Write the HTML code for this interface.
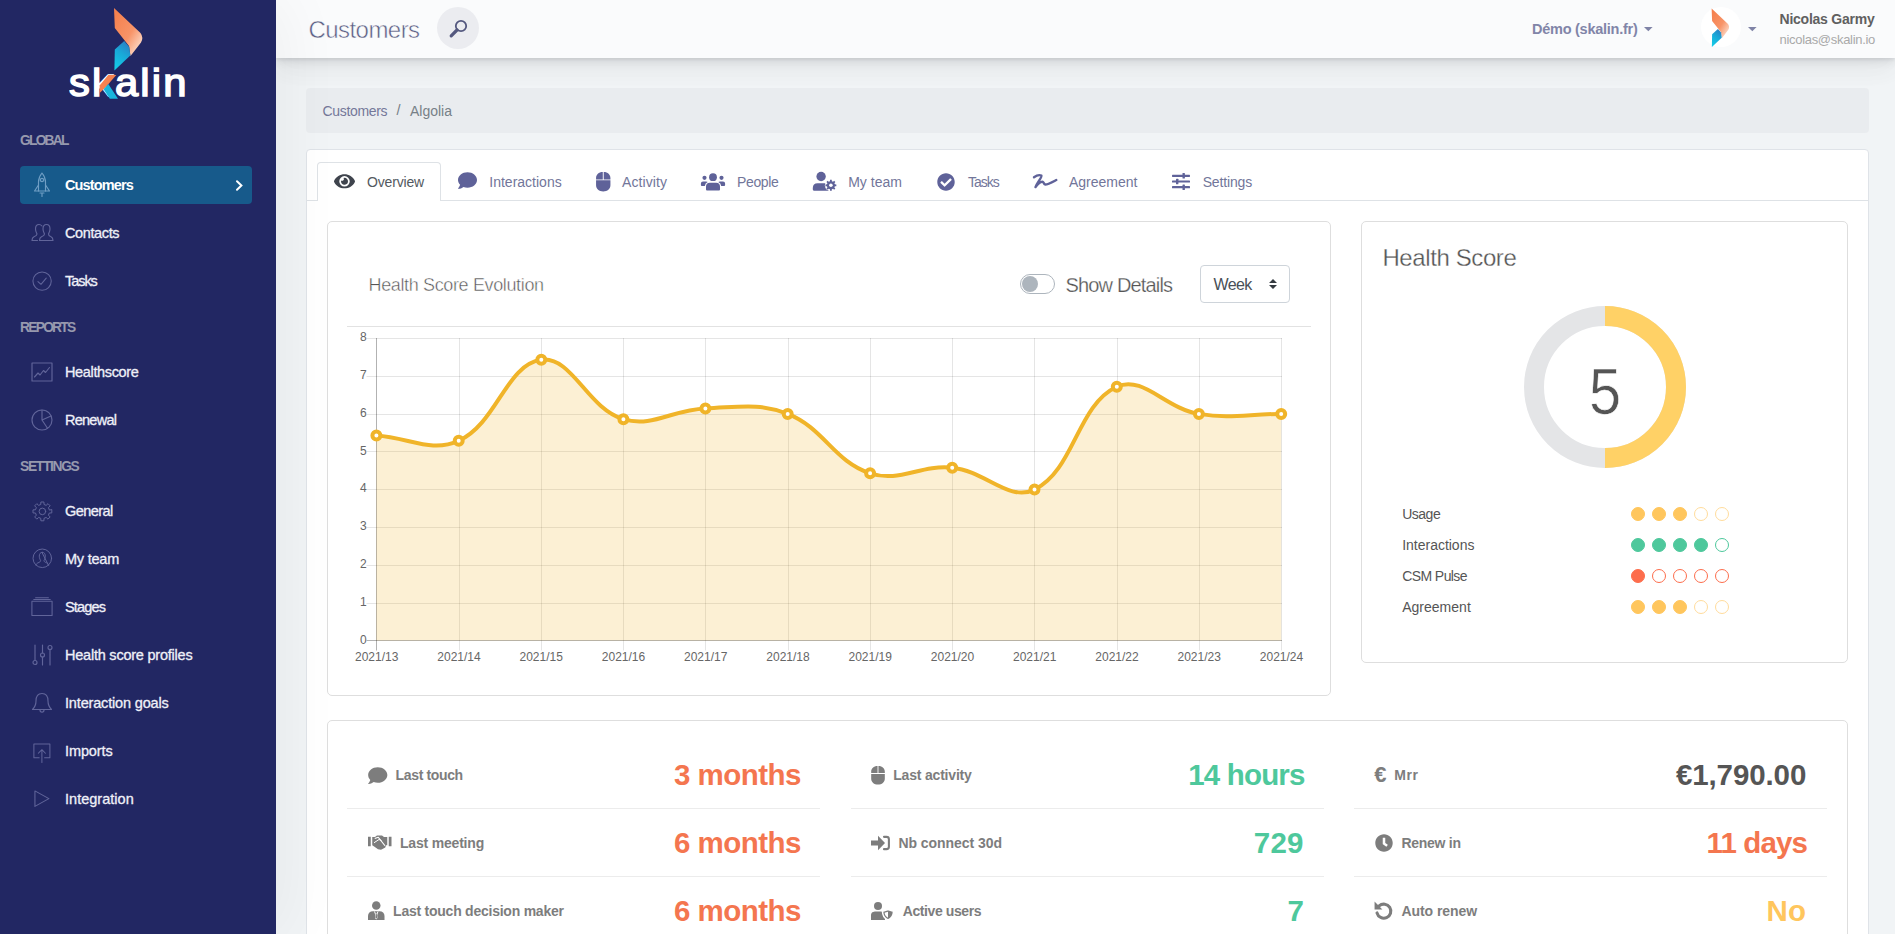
<!DOCTYPE html>
<html lang="en"><head><meta charset="utf-8"><title>Customers - Algolia</title>
<style>
*{box-sizing:border-box;margin:0;padding:0}
html,body{width:1895px;height:934px;overflow:hidden}
body{position:relative;background:#f1f4f6;font-family:"Liberation Sans",sans-serif;color:#555}
.t{position:absolute;white-space:nowrap}
.abs{position:absolute}
#sidebar{position:absolute;left:0;top:0;width:276px;height:934px;background:#222763;box-shadow:7px 0 60px rgba(0,0,0,.05);z-index:5}
#header{position:absolute;left:276px;top:0;width:1619px;height:58px;background:#fafbfc;z-index:4;
 box-shadow:0 7.5px 35px rgba(4,9,20,.03),0 15px 22.5px rgba(4,9,20,.03),0 4px 8.5px rgba(4,9,20,.08),0 2px 3px rgba(4,9,20,.06)}
#crumb{position:absolute;left:306px;top:88px;width:1563px;height:44.5px;background:#e9ecef;border-radius:4px}
#main{position:absolute;left:306px;top:149px;width:1563px;height:800px;background:#fff;border:1px solid #dfe3e8;border-radius:4px 4px 0 0}
.card{position:absolute;background:#fff;border:1px solid #dedede;border-radius:5px}
.hr{position:absolute;height:1px;background:#ececec}
.dot{position:absolute;width:14px;height:14px;border-radius:50%;border:1px solid}
svg{position:absolute;overflow:visible}
</style></head><body>

<div id="sidebar">
<svg style="left:0;top:0" width="276" height="110" viewBox="0 0 276 110">
<defs>
<linearGradient id="g1" x1="0.1" y1="0.1" x2="0.9" y2="0.95"><stop offset="0" stop-color="#f5814f"/><stop offset=".55" stop-color="#f89468"/><stop offset="1" stop-color="#fde3d4"/></linearGradient>
<linearGradient id="g2" x1="0.7" y1="0" x2="0.3" y2="1"><stop offset="0" stop-color="#2b7fc4"/><stop offset=".45" stop-color="#19a9d8"/><stop offset="1" stop-color="#14cbe6"/></linearGradient>
</defs>
<path d="M114 8 L140.500 33 Q143.800 37.500 141 42.500 L130.500 56 L129 46 L114.800 28 Z" fill="url(#g1)"/>
<path d="M124.200 41 L129.300 47 L130.300 55.500 L114.400 70.500 L114.800 49.500 Z" fill="url(#g2)"/>
</svg>
<div class="t" style="left:68.500px;top:54.500px;font-size:39px;line-height:56px;color:#fff;letter-spacing:2px;-webkit-text-stroke:1.5px #fff;transform:scaleX(1.07);transform-origin:0 0">skalin</div>
<svg style="left:0;top:0" width="276" height="110" viewBox="0 0 276 110"><path d="M99.600 85.500 L108.300 75 L116.300 75 L105 88 L99.600 93 Z" fill="#f58250"/><path d="M103.600 89.200 L108.300 84 L118 98.800 L109.800 98.800 Z" fill="#19b5dc"/></svg>
<div class="t" style="left:20.00px;top:132.40px;font-size:13.8px;line-height:18px;font-weight:700;color:#9799ae;letter-spacing:-1.760px;">GLOBAL</div>
<div class="t" style="left:20.00px;top:319.40px;font-size:13.8px;line-height:18px;font-weight:700;color:#9799ae;letter-spacing:-1.744px;">REPORTS</div>
<div class="t" style="left:20.00px;top:458.40px;font-size:13.8px;line-height:18px;font-weight:700;color:#9799ae;letter-spacing:-1.313px;">SETTINGS</div>
<div class="abs" style="left:20px;top:166px;width:232px;height:38px;background:#175a8b;border-radius:4px"></div>
<svg style="left:234.5px;top:179.6px" width="9" height="11" viewBox="0 0 9 11"><path d="M2 1.300 L6.400 5.500 L2 9.700" fill="none" stroke="#fff" stroke-width="2" stroke-linecap="round" stroke-linejoin="miter"/></svg>
<div class="t" style="left:65.00px;top:175.50px;font-size:14.5px;line-height:19px;font-weight:700;color:#fff;letter-spacing:-0.860px;">Customers</div>
<div class="t" style="left:65.00px;top:223.50px;font-size:14.5px;line-height:19px;font-weight:400;color:#eff0f8;letter-spacing:-0.377px;-webkit-text-stroke:.3px #eff0f8;">Contacts</div>
<div class="t" style="left:65.00px;top:271.50px;font-size:14.5px;line-height:19px;font-weight:400;color:#eff0f8;letter-spacing:-1.053px;-webkit-text-stroke:.3px #eff0f8;">Tasks</div>
<div class="t" style="left:65.00px;top:362.50px;font-size:14.5px;line-height:19px;font-weight:400;color:#eff0f8;letter-spacing:-0.352px;-webkit-text-stroke:.3px #eff0f8;">Healthscore</div>
<div class="t" style="left:65.00px;top:410.50px;font-size:14.5px;line-height:19px;font-weight:400;color:#eff0f8;letter-spacing:-0.746px;-webkit-text-stroke:.3px #eff0f8;">Renewal</div>
<div class="t" style="left:65.00px;top:501.50px;font-size:14.5px;line-height:19px;font-weight:400;color:#eff0f8;letter-spacing:-0.569px;-webkit-text-stroke:.3px #eff0f8;">General</div>
<div class="t" style="left:65.00px;top:549.50px;font-size:14.5px;line-height:19px;font-weight:400;color:#eff0f8;letter-spacing:-0.227px;-webkit-text-stroke:.3px #eff0f8;">My team</div>
<div class="t" style="left:65.00px;top:597.50px;font-size:14.5px;line-height:19px;font-weight:400;color:#eff0f8;letter-spacing:-0.823px;-webkit-text-stroke:.3px #eff0f8;">Stages</div>
<div class="t" style="left:65.00px;top:645.50px;font-size:14.5px;line-height:19px;font-weight:400;color:#eff0f8;letter-spacing:-0.227px;-webkit-text-stroke:.3px #eff0f8;">Health score profiles</div>
<div class="t" style="left:65.00px;top:693.50px;font-size:14.5px;line-height:19px;font-weight:400;color:#eff0f8;letter-spacing:-0.164px;-webkit-text-stroke:.3px #eff0f8;">Interaction goals</div>
<div class="t" style="left:65.00px;top:741.50px;font-size:14.5px;line-height:19px;font-weight:400;color:#eff0f8;letter-spacing:-0.106px;-webkit-text-stroke:.3px #eff0f8;">Imports</div>
<div class="t" style="left:65.00px;top:789.50px;font-size:14.5px;line-height:19px;font-weight:400;color:#eff0f8;letter-spacing:0.017px;-webkit-text-stroke:.3px #eff0f8;">Integration</div>
<svg style="left:33px;top:172px" width="18" height="26" viewBox="0 0 18 26"><g fill="none" stroke="#6f9ec4" stroke-width="1.15" stroke-linecap="round" stroke-linejoin="round"><path d="M9 1 C6.5 4 5.5 7 5.5 10 L5.5 19 L12.5 19 L12.5 10 C12.5 7 11.500 4 9 1 Z"/><circle cx="9" cy="8" r="1.6"/><path d="M5.500 13 L1.500 19 L5.500 19 M12.500 13 L16.500 19 L12.500 19 M7 21 L11 21 M9 21 L9 24.500"/></g></svg>
<svg style="left:31px;top:223px" width="23" height="19" viewBox="0 0 23 19"><g fill="none" stroke="#61659a" stroke-width="1.15" stroke-linecap="round" stroke-linejoin="round"><path d="M15.500 1.500 C13 1.500 12 3.500 12 6 C12 8.500 13 10 13.500 11 C13.500 12.500 12.500 13 10.500 13.800 C9 14.500 8.500 15.500 8.500 17.500 L22 17.500 C22 15.500 21.500 14.500 20 13.800 C18 13 17.500 12.500 17.500 11 C18 10 19 8.500 19 6 C19 3.500 18 1.500 15.500 1.500 Z"/><path d="M11 3 C10 1.800 9 1.500 8 1.500 C5.500 1.500 4.500 3.500 4.500 6 C4.500 8.500 5.500 10 6 11 C6 12.500 5 13 3 13.800 C1.500 14.500 1 15.500 1 17.500 L6.500 17.500"/></g></svg>
<svg style="left:31.900px;top:270.700px" width="20.200" height="20.200" viewBox="0 0 22 22"><g fill="none" stroke="#61659a" stroke-width="1.15" stroke-linecap="round" stroke-linejoin="round"><circle cx="11" cy="11" r="10"/><path d="M6.500 11.500 L9.800 14.500 L15.500 7.800"/></g></svg>
<svg style="left:31px;top:362px" width="22" height="20" viewBox="0 0 22 20"><g fill="none" stroke="#61659a" stroke-width="1.15" stroke-linecap="round" stroke-linejoin="round"><rect x="1" y="1" width="20" height="18"/><path d="M3.500 15 L7 11 L9 13 L12.500 8.500 L14.500 10.500 L18.500 5.500"/></g></svg>
<svg style="left:31px;top:409px" width="22" height="22" viewBox="0 0 22 22"><g fill="none" stroke="#61659a" stroke-width="1.15" stroke-linecap="round" stroke-linejoin="round"><circle cx="11" cy="11" r="10"/><path d="M11 1 L11 11 L20 7 M11 11 L16.500 19.300"/></g></svg>
<svg style="left:31.6px;top:500.6px" width="20.800" height="20.800" viewBox="0 0 24 24"><g fill="none" stroke="#61659a" stroke-width="1.15" stroke-linecap="round" stroke-linejoin="round"><path d="M22.86 10.25 L22.86 13.75 L19.98 13.87 L18.97 16.32 L20.92 18.44 L18.44 20.92 L16.32 18.97 L13.87 19.98 L13.75 22.86 L10.25 22.86 L10.13 19.98 L7.68 18.97 L5.56 20.92 L3.08 18.44 L5.03 16.32 L4.02 13.87 L1.14 13.75 L1.14 10.25 L4.02 10.13 L5.03 7.68 L3.08 5.56 L5.56 3.08 L7.68 5.03 L10.13 4.02 L10.25 1.14 L13.75 1.14 L13.87 4.02 L16.32 5.03 L18.44 3.08 L20.92 5.56 L18.97 7.68 L19.98 10.13 Z"/><circle cx="12" cy="12" r="3.800"/></g></svg>
<svg style="left:31.8px;top:548.2px" width="20.600" height="20.600" viewBox="0 0 24 24"><g fill="none" stroke="#61659a" stroke-width="1.15" stroke-linecap="round" stroke-linejoin="round"><circle cx="12" cy="12" r="10.800"/><path d="M12 5 C9.500 5 8.500 7 8.500 9.500 C8.500 12 9.500 13.500 10 14.500 C10 16 9 16.500 7 17.300 C5.800 17.800 5 18.500 4.700 20 M19.300 20 C19 18.500 18.200 17.800 17 17.300 C15 16.500 14 16 14 14.500 C14.500 13.500 15.500 12 15.500 9.500 C15.500 7 14.500 5 12 5 Z"/></g></svg>
<svg style="left:30.8px;top:596.6px" width="22" height="19.500" viewBox="0 0 24 21" preserveAspectRatio="none"><g fill="none" stroke="#61659a" stroke-width="1.15" stroke-linecap="round" stroke-linejoin="round"><rect x="1" y="4.500" width="22" height="15.500"/><path d="M3 2.600 L21 2.600 M5 0.800 L19 0.800"/></g></svg>
<svg style="left:32px;top:644px" width="21" height="22" viewBox="0 0 21 22"><g fill="none" stroke="#61659a" stroke-width="1.15" stroke-linecap="round" stroke-linejoin="round"><path d="M3 1 L3 16.500 M10.500 1 L10.500 9 M10.500 13 L10.500 21 M18 5.500 L18 21"/><circle cx="3" cy="18.500" r="2"/><circle cx="10.500" cy="11" r="2"/><circle cx="18" cy="3.500" r="2"/></g></svg>
<svg style="left:31px;top:692px" width="22" height="23" viewBox="0 0 22 23"><g fill="none" stroke="#61659a" stroke-width="1.15" stroke-linecap="round" stroke-linejoin="round"><path d="M11 1.500 C6.500 1.500 5 5 5 9 C5 13 3.500 15.500 1.500 17.500 L20.500 17.500 C18.500 15.500 17 13 17 9 C17 5 15.500 1.500 11 1.500 Z M9 18 C9 20.800 13 20.800 13 18"/></g></svg>
<svg style="left:33px;top:742.6px" width="17.800" height="20.500" viewBox="0 0 20 23"><g fill="none" stroke="#61659a" stroke-width="1.15" stroke-linecap="round" stroke-linejoin="round"><path d="M7 16.500 L1 16.500 L1 1 L19 1 L19 16.500 L13 16.500 M10 22 L10 7.500 M6 11.500 L10 7.500 L14 11.500"/></g></svg>
<svg style="left:33.800px;top:790.2px" width="15.800" height="17.300" viewBox="0 0 17 19" preserveAspectRatio="none"><g fill="none" stroke="#61659a" stroke-width="1.15" stroke-linecap="round" stroke-linejoin="round"><path d="M1 1 L16 9.500 L1 18 Z"/></g></svg>
</div>
<div id="header"></div>
<div style="position:absolute;z-index:6;left:0;top:0">
<div class="t" style="left:308.50px;top:14.10px;font-size:24px;line-height:31px;font-weight:400;color:#5a5e83;letter-spacing:-0.558px;-webkit-text-stroke:.5px #fafbfc;">Customers</div>
<div class="abs" style="left:437px;top:7px;width:42px;height:42px;border-radius:50%;background:#ebecf0"></div>
<svg style="left:448px;top:17.500px" width="21" height="21" viewBox="0 0 21 21"><circle cx="13" cy="8" r="5.200" fill="none" stroke="#54587f" stroke-width="1.800"/><path d="M9 12 L3.200 17.800" stroke="#54587f" stroke-width="3.200" stroke-linecap="round"/></svg>
<div class="t" style="left:1532.00px;top:19.50px;font-size:14.5px;line-height:19px;font-weight:700;color:#8185a8;letter-spacing:-0.255px;">Démo (skalin.fr)</div>
<svg style="left:1644.2px;top:27.2px" width="8.600" height="4.300" viewBox="0 0 9 5" preserveAspectRatio="none"><path d="M0 0 L9 0 L4.500 5 Z" fill="#7f83a6"/></svg>
<div class="abs" style="left:1701px;top:7px;width:40px;height:40px;border-radius:50%;background:#fff"></div>
<svg style="left:1710.6px;top:7.8px" width="19.200" height="39.700" viewBox="113 7 31 64.500" preserveAspectRatio="none">
<path d="M114 8 L140.500 33 Q143.800 37.500 141 42.500 L130.500 56 L129 46 L114.800 28 Z" fill="url(#g1)"/>
<path d="M124.200 41 L129.300 47 L130.300 55.500 L114.400 70.500 L114.800 49.500 Z" fill="url(#g2)"/></svg>
<svg style="left:1748.2px;top:27.200px" width="8.600" height="4.300" viewBox="0 0 9 5" preserveAspectRatio="none"><path d="M0 0 L9 0 L4.500 5 Z" fill="#7f83a6"/></svg>
<div class="t" style="left:1779.50px;top:9.80px;font-size:14px;line-height:18px;font-weight:700;color:#606060;letter-spacing:-0.234px;">Nicolas Garmy</div>
<div class="t" style="left:1779.50px;top:31.00px;font-size:13px;line-height:17px;font-weight:400;color:#a9a9a9;letter-spacing:-0.302px;">nicolas@skalin.io</div>
</div>
<div id="crumb"></div>
<div class="t" style="left:322.50px;top:101.50px;font-size:14px;line-height:18px;font-weight:400;color:#747899;letter-spacing:-0.320px;">Customers</div>
<div class="t" style="left:396.50px;top:101.00px;font-size:14.5px;line-height:19px;font-weight:400;color:#778087;letter-spacing:0.000px;">/</div>
<div class="t" style="left:410.00px;top:101.50px;font-size:14px;line-height:18px;font-weight:400;color:#778087;letter-spacing:-0.004px;">Algolia</div>
<div id="main"></div>
<div class="abs" style="left:307px;top:200px;width:1561px;height:1px;background:#dee2e6"></div>
<div class="abs" style="left:317px;top:162px;width:124px;height:39px;background:#fff;border:1px solid #dee2e6;border-bottom:none;border-radius:4px 4px 0 0"></div>
<div class="t" style="left:367.00px;top:173.00px;font-size:14px;line-height:18px;font-weight:400;color:#535960;letter-spacing:-0.168px;">Overview</div>
<div class="t" style="left:489.30px;top:173.00px;font-size:14px;line-height:18px;font-weight:400;color:#72769a;letter-spacing:0.003px;">Interactions</div>
<div class="t" style="left:622.00px;top:173.00px;font-size:14px;line-height:18px;font-weight:400;color:#72769a;letter-spacing:0.083px;">Activity</div>
<div class="t" style="left:737.00px;top:173.00px;font-size:14px;line-height:18px;font-weight:400;color:#72769a;letter-spacing:-0.365px;">People</div>
<div class="t" style="left:848.20px;top:173.00px;font-size:14px;line-height:18px;font-weight:400;color:#72769a;letter-spacing:0.018px;">My team</div>
<div class="t" style="left:968.00px;top:173.00px;font-size:14px;line-height:18px;font-weight:400;color:#72769a;letter-spacing:-1.017px;">Tasks</div>
<div class="t" style="left:1069.00px;top:173.00px;font-size:14px;line-height:18px;font-weight:400;color:#72769a;letter-spacing:-0.020px;">Agreement</div>
<div class="t" style="left:1202.70px;top:173.00px;font-size:14px;line-height:18px;font-weight:400;color:#72769a;letter-spacing:-0.160px;">Settings</div>
<svg style="left:334px;top:171.7px" width="21" height="18.7" viewBox="0 0 576 512" ><path d="M572.52 241.4C518.29 135.59 410.93 64 288 64S57.68 135.64 3.48 241.41a32.35 32.35 0 0 0 0 29.19C57.71 376.41 165.07 448 288 448s230.32-71.64 284.52-177.41a32.35 32.35 0 0 0 0-29.19zM288 400a144 144 0 1 1 144-144 143.93 143.93 0 0 1-144 144zm0-240a95.31 95.31 0 0 0-25.31 3.79 47.85 47.85 0 0 1-66.9 66.9A95.780 95.780 0 1 0 288 160z" fill="#3f444d" fill-rule="evenodd"/></svg>
<svg style="left:458px;top:171.4px" width="19" height="19" viewBox="0 0 512 512" ><path d="M256 32C114.6 32 0 125.1 0 240c0 49.6 21.4 95 57 130.7C44.5 421.1 2.7 466 2.2 466.5c-2.2 2.3-2.8 5.7-1.5 8.7S4.8 480 8 480c66.3 0 116-31.8 140.6-51.4 32.7 12.3 69 19.4 107.4 19.4 141.4 0 256-93.1 256-208S397.4 32 256 32z" fill="#5f6299" fill-rule="evenodd"/></svg>
<svg style="left:595.5px;top:171.5px" width="14.5" height="19.5" viewBox="0 0 14 19"><path d="M6.550 0 L6.550 7.200 L0 7.200 L0 6 C0 2.500 2.500 0 6.550 0 Z M7.450 0 C11.500 0 14 2.500 14 6 L14 7.200 L7.450 7.200 Z M0 8.100 L14 8.100 L14 13 C14 16.500 11 19 7 19 C3 19 0 16.500 0 13 Z" fill="#5f6299"/></svg>
<svg style="left:0;top:0" width="1895" height="220" viewBox="0 0 1895 220"><g fill="#5f6299"><circle cx="713" cy="177.200" r="3.900"/><path d="M706 189.500 L706 186.600 Q706 182.800 709.800 182.800 L716.200 182.800 Q720 182.800 720 186.600 L720 189.500 Q720 190.400 719 190.400 L707 190.400 Q706 190.400 706 189.500 Z"/><circle cx="704.500" cy="177.800" r="2.100"/><path d="M700.900 185 L700.900 183.600 Q700.900 181.500 703 181.500 L706 181.500 Q707.200 181.500 707.700 182.100 Q705.200 183.300 704.800 185.900 L701.800 185.900 Q700.900 185.900 700.900 185 Z"/><circle cx="721.500" cy="177.800" r="2.100"/><path d="M725.100 185 L725.100 183.600 Q725.100 181.500 723 181.500 L720 181.500 Q718.800 181.500 718.300 182.100 Q720.800 183.300 721.200 185.900 L724.200 185.900 Q725.100 185.900 725.100 185 Z"/></g></svg>
<svg style="left:0;top:0" width="1895" height="220" viewBox="0 0 1895 220"><g fill="#5f6299"><circle cx="821.100" cy="176.500" r="4.700"/><path d="M812.800 189.600 L812.800 188 Q812.800 183.200 817.600 183.200 L824.600 183.200 Q829.400 183.200 829.400 188 L829.400 190.700 L813.900 190.700 Q812.800 190.700 812.800 189.600 Z"/><circle cx="830.900" cy="185.300" r="6" fill="#fff"/><path d="M836.33 184.42 L836.33 186.18 L834.89 186.23 L834.38 187.46 L835.36 188.52 L834.12 189.76 L833.06 188.78 L831.83 189.29 L831.78 190.73 L830.02 190.73 L829.97 189.29 L828.74 188.78 L827.68 189.76 L826.44 188.52 L827.42 187.46 L826.91 186.23 L825.47 186.18 L825.47 184.42 L826.91 184.37 L827.42 183.14 L826.44 182.08 L827.68 180.84 L828.74 181.82 L829.97 181.31 L830.02 179.87 L831.78 179.87 L831.83 181.31 L833.06 181.82 L834.12 180.84 L835.36 182.08 L834.38 183.14 L834.89 184.37 Z"/><circle cx="830.900" cy="185.300" r="1.800" fill="#fff"/></g></svg>
<svg style="left:937px;top:173px" width="18" height="18" viewBox="0 0 512 512" ><path d="M504 256c0 136.967-111.033 248-248 248S8 392.967 8 256 119.033 8 256 8s248 111.033 248 248zM227.314 387.314l184-184c6.248-6.248 6.248-16.379 0-22.627l-22.627-22.627c-6.248-6.249-16.379-6.249-22.628 0L216 308.118l-70.059-70.059c-6.248-6.248-16.379-6.248-22.628 0l-22.627 22.627c-6.248 6.248-6.248 16.379 0 22.627l104 104c6.249 6.249 16.379 6.249 22.628.001z" fill="#5f6299" fill-rule="evenodd"/></svg>
<svg style="left:1033px;top:172px" width="25" height="19" viewBox="0 0 25 19"><path d="M1 5.300 C3.200 3.700 6.500 2.700 8.400 3.600 C9 5.500 4 11 2.500 15.100 C4.500 12 8 9.200 9.800 9.800 C11 10.300 10.500 12.300 12.200 12.500 C15 12.600 19.500 10 23.300 8" fill="none" stroke="#5f6299" stroke-width="2.400" stroke-linecap="round" stroke-linejoin="round"/></svg>
<svg style="left:1172px;top:173px" width="18" height="17" viewBox="0 0 18 17"><g fill="#5f6299"><rect x="0" y="1.700" width="18" height="2.200" rx=".6"/><rect x="0" y="7.400" width="18" height="2.200" rx=".6"/><rect x="0" y="13.100" width="18" height="2.200" rx=".6"/><rect x="10.500" y="0" width="2.400" height="5.600" rx=".6"/><rect x="4" y="5.700" width="2.400" height="5.600" rx=".6"/><rect x="10.500" y="11.400" width="2.400" height="5.600" rx=".6"/></g></svg>
<div class="card" style="left:327px;top:221px;width:1004px;height:475px"></div>
<div class="t" style="left:368.50px;top:273.50px;font-size:18px;line-height:23px;font-weight:400;color:#555;letter-spacing:-0.359px;-webkit-text-stroke:.45px #fff;">Health Score Evolution</div>
<div class="abs" style="left:1020px;top:274px;width:35px;height:20px;border:1px solid #adb5bd;border-radius:10px;background:#fff"></div>
<div class="abs" style="left:1022px;top:276px;width:16px;height:16px;border-radius:50%;background:#adb5bd"></div>
<div class="t" style="left:1065.50px;top:271.80px;font-size:20px;line-height:26px;font-weight:400;color:#555;letter-spacing:-0.835px;-webkit-text-stroke:.25px #fff;">Show Details</div>
<div class="abs" style="left:1200px;top:265px;width:90px;height:38px;border:1px solid #ced4da;border-radius:4px;background:#fff"></div>
<div class="t" style="left:1213.50px;top:273.50px;font-size:16px;line-height:21px;font-weight:400;color:#495057;letter-spacing:-0.652px;">Week</div>
<svg style="left:1269px;top:279px" width="8" height="10" viewBox="0 0 8 10"><path d="M4 0 L8 4 L0 4 Z M0 6 L8 6 L4 10 Z" fill="#343a40"/></svg>
<div class="hr" style="left:347px;top:326px;width:964px;background:#e2e2e2"></div>
<svg style="left:0;top:0" width="1895" height="934" viewBox="0 0 1895 934">
<path d="M376.5 338 L376.5 650.5" stroke="rgba(0,0,0,0.3)" stroke-width="1"/>
<path d="M459.5 338 L459.5 650.5" stroke="rgba(0,0,0,0.1)" stroke-width="1"/>
<path d="M541.5 338 L541.5 650.5" stroke="rgba(0,0,0,0.1)" stroke-width="1"/>
<path d="M623.5 338 L623.5 650.5" stroke="rgba(0,0,0,0.1)" stroke-width="1"/>
<path d="M705.5 338 L705.5 650.5" stroke="rgba(0,0,0,0.1)" stroke-width="1"/>
<path d="M788.5 338 L788.5 650.5" stroke="rgba(0,0,0,0.1)" stroke-width="1"/>
<path d="M870.5 338 L870.5 650.5" stroke="rgba(0,0,0,0.1)" stroke-width="1"/>
<path d="M952.5 338 L952.5 650.5" stroke="rgba(0,0,0,0.1)" stroke-width="1"/>
<path d="M1034.5 338 L1034.5 650.5" stroke="rgba(0,0,0,0.1)" stroke-width="1"/>
<path d="M1117.5 338 L1117.5 650.5" stroke="rgba(0,0,0,0.1)" stroke-width="1"/>
<path d="M1199.5 338 L1199.5 650.5" stroke="rgba(0,0,0,0.1)" stroke-width="1"/>
<path d="M1281.5 338 L1281.5 650.5" stroke="rgba(0,0,0,0.1)" stroke-width="1"/>
<path d="M366.5 640.5 L1282 640.5" stroke="rgba(0,0,0,0.3)" stroke-width="1"/>
<path d="M366.5 603.5 L1282 603.5" stroke="rgba(0,0,0,0.1)" stroke-width="1"/>
<path d="M366.5 565.5 L1282 565.5" stroke="rgba(0,0,0,0.1)" stroke-width="1"/>
<path d="M366.5 527.5 L1282 527.5" stroke="rgba(0,0,0,0.1)" stroke-width="1"/>
<path d="M366.5 489.5 L1282 489.5" stroke="rgba(0,0,0,0.1)" stroke-width="1"/>
<path d="M366.5 451.5 L1282 451.5" stroke="rgba(0,0,0,0.1)" stroke-width="1"/>
<path d="M366.5 414.5 L1282 414.5" stroke="rgba(0,0,0,0.1)" stroke-width="1"/>
<path d="M366.5 376.5 L1282 376.5" stroke="rgba(0,0,0,0.1)" stroke-width="1"/>
<path d="M366.5 338.5 L1282 338.5" stroke="rgba(0,0,0,0.1)" stroke-width="1"/>
<path d="M376.4 435.5 C409.3 437.6 431.2 453.4 458.7 440.8 C497.2 423.1 506.2 364.4 541.3 359.8 C572.1 355.8 587.3 408.5 623.4 419.2 C652.9 427.9 672.5 409.5 705.4 408.4 C738.2 407.3 758.2 402.3 787.7 413.9 C824.1 428.2 833.7 461.4 870.1 473.3 C899.5 482.9 919.9 464.5 952.2 467.7 C985.6 471.0 1008.7 502.3 1034.5 489.6 C1074.5 469.9 1077.1 405.0 1116.8 386.7 C1142.9 374.7 1165.2 408.3 1198.9 413.9 C1231.0 419.2 1248.3 413.9 1281.2 413.9 L1281.2 640.5 L376.4 640.5 Z" fill="rgba(240,180,41,0.2)"/>
<path d="M376.4 435.5 C409.3 437.6 431.2 453.4 458.7 440.8 C497.2 423.1 506.2 364.4 541.3 359.8 C572.1 355.8 587.3 408.5 623.4 419.2 C652.9 427.9 672.5 409.5 705.4 408.4 C738.2 407.3 758.2 402.3 787.7 413.9 C824.1 428.2 833.7 461.4 870.1 473.3 C899.5 482.9 919.9 464.5 952.2 467.7 C985.6 471.0 1008.7 502.3 1034.5 489.6 C1074.5 469.9 1077.1 405.0 1116.8 386.7 C1142.9 374.7 1165.2 408.3 1198.9 413.9 C1231.0 419.2 1248.3 413.9 1281.2 413.9" fill="none" stroke="#f0b429" stroke-width="4" stroke-linecap="butt" stroke-linejoin="miter"/>
<circle cx="376.4" cy="435.5" r="4" fill="#fff" stroke="#f0b429" stroke-width="4"/>
<circle cx="458.7" cy="440.8" r="4" fill="#fff" stroke="#f0b429" stroke-width="4"/>
<circle cx="541.3" cy="359.8" r="4" fill="#fff" stroke="#f0b429" stroke-width="4"/>
<circle cx="623.4" cy="419.2" r="4" fill="#fff" stroke="#f0b429" stroke-width="4"/>
<circle cx="705.4" cy="408.4" r="4" fill="#fff" stroke="#f0b429" stroke-width="4"/>
<circle cx="787.7" cy="413.9" r="4" fill="#fff" stroke="#f0b429" stroke-width="4"/>
<circle cx="870.1" cy="473.3" r="4" fill="#fff" stroke="#f0b429" stroke-width="4"/>
<circle cx="952.2" cy="467.7" r="4" fill="#fff" stroke="#f0b429" stroke-width="4"/>
<circle cx="1034.5" cy="489.6" r="4" fill="#fff" stroke="#f0b429" stroke-width="4"/>
<circle cx="1116.8" cy="386.7" r="4" fill="#fff" stroke="#f0b429" stroke-width="4"/>
<circle cx="1198.9" cy="413.9" r="4" fill="#fff" stroke="#f0b429" stroke-width="4"/>
<circle cx="1281.2" cy="413.9" r="4" fill="#fff" stroke="#f0b429" stroke-width="4"/>
<text x="366.6" y="643.6" text-anchor="end" font-size="12" fill="#666">0</text>
<text x="366.6" y="605.8" text-anchor="end" font-size="12" fill="#666">1</text>
<text x="366.6" y="568.0" text-anchor="end" font-size="12" fill="#666">2</text>
<text x="366.6" y="530.2" text-anchor="end" font-size="12" fill="#666">3</text>
<text x="366.6" y="492.4" text-anchor="end" font-size="12" fill="#666">4</text>
<text x="366.6" y="454.6" text-anchor="end" font-size="12" fill="#666">5</text>
<text x="366.6" y="416.8" text-anchor="end" font-size="12" fill="#666">6</text>
<text x="366.6" y="379.0" text-anchor="end" font-size="12" fill="#666">7</text>
<text x="366.6" y="341.2" text-anchor="end" font-size="12" fill="#666">8</text>
<text x="376.7" y="660.9" text-anchor="middle" font-size="12" fill="#666">2021/13</text>
<text x="459.0" y="660.9" text-anchor="middle" font-size="12" fill="#666">2021/14</text>
<text x="541.2" y="660.9" text-anchor="middle" font-size="12" fill="#666">2021/15</text>
<text x="623.5" y="660.9" text-anchor="middle" font-size="12" fill="#666">2021/16</text>
<text x="705.7" y="660.9" text-anchor="middle" font-size="12" fill="#666">2021/17</text>
<text x="788.0" y="660.9" text-anchor="middle" font-size="12" fill="#666">2021/18</text>
<text x="870.2" y="660.9" text-anchor="middle" font-size="12" fill="#666">2021/19</text>
<text x="952.5" y="660.9" text-anchor="middle" font-size="12" fill="#666">2021/20</text>
<text x="1034.7" y="660.9" text-anchor="middle" font-size="12" fill="#666">2021/21</text>
<text x="1117.0" y="660.9" text-anchor="middle" font-size="12" fill="#666">2021/22</text>
<text x="1199.2" y="660.9" text-anchor="middle" font-size="12" fill="#666">2021/23</text>
<text x="1281.5" y="660.9" text-anchor="middle" font-size="12" fill="#666">2021/24</text>
</svg>
<div class="card" style="left:1361px;top:221px;width:487px;height:442px"></div>
<div class="t" style="left:1382.40px;top:241.50px;font-size:24px;line-height:31px;font-weight:400;color:#555;letter-spacing:-0.394px;-webkit-text-stroke:.3px #fff;">Health Score</div>
<svg style="left:1523px;top:305px" width="164" height="164" viewBox="0 0 164 164"><circle cx="82" cy="82" r="71" fill="none" stroke="#e4e5e7" stroke-width="20"/><path d="M82 11 A71 71 0 0 1 82 153" fill="none" stroke="#ffd166" stroke-width="20"/></svg>
<div class="t" style="left:1555px;top:352.3px;width:100px;text-align:center;font-size:64px;line-height:80px;color:#555;-webkit-text-stroke:.6px #fff;transform:scaleX(.9)">5</div>
<div class="t" style="left:1402.20px;top:505.00px;font-size:14px;line-height:18px;font-weight:400;color:#555;letter-spacing:-0.493px;">Usage</div>
<div class="dot" style="left:1631px;top:507px;background:#ffc65d;border-color:#ffc65d"></div>
<div class="dot" style="left:1652px;top:507px;background:#ffc65d;border-color:#ffc65d"></div>
<div class="dot" style="left:1673px;top:507px;background:#ffc65d;border-color:#ffc65d"></div>
<div class="dot" style="left:1694px;top:507px;background:#fff;border-color:#ffdc9c"></div>
<div class="dot" style="left:1715px;top:507px;background:#fff;border-color:#ffdc9c"></div>
<div class="t" style="left:1402.20px;top:536.00px;font-size:14px;line-height:18px;font-weight:400;color:#555;letter-spacing:-0.014px;">Interactions</div>
<div class="dot" style="left:1631px;top:538px;background:#4ec89c;border-color:#4ec89c"></div>
<div class="dot" style="left:1652px;top:538px;background:#4ec89c;border-color:#4ec89c"></div>
<div class="dot" style="left:1673px;top:538px;background:#4ec89c;border-color:#4ec89c"></div>
<div class="dot" style="left:1694px;top:538px;background:#4ec89c;border-color:#4ec89c"></div>
<div class="dot" style="left:1715px;top:538px;background:#fff;border-color:#4ec89c"></div>
<div class="t" style="left:1402.20px;top:567.00px;font-size:14px;line-height:18px;font-weight:400;color:#555;letter-spacing:-0.580px;">CSM Pulse</div>
<div class="dot" style="left:1631px;top:569px;background:#fd6d4c;border-color:#fd6d4c"></div>
<div class="dot" style="left:1652px;top:569px;background:#fff;border-color:#fd6d4c"></div>
<div class="dot" style="left:1673px;top:569px;background:#fff;border-color:#fd6d4c"></div>
<div class="dot" style="left:1694px;top:569px;background:#fff;border-color:#fd6d4c"></div>
<div class="dot" style="left:1715px;top:569px;background:#fff;border-color:#fd6d4c"></div>
<div class="t" style="left:1402.20px;top:598.00px;font-size:14px;line-height:18px;font-weight:400;color:#555;letter-spacing:0.014px;">Agreement</div>
<div class="dot" style="left:1631px;top:600px;background:#ffc65d;border-color:#ffc65d"></div>
<div class="dot" style="left:1652px;top:600px;background:#ffc65d;border-color:#ffc65d"></div>
<div class="dot" style="left:1673px;top:600px;background:#ffc65d;border-color:#ffc65d"></div>
<div class="dot" style="left:1694px;top:600px;background:#fff;border-color:#ffdc9c"></div>
<div class="dot" style="left:1715px;top:600px;background:#fff;border-color:#ffdc9c"></div>
<div class="card" style="left:327px;top:720px;width:1521px;height:300px"></div>
<div class="hr" style="left:347px;top:808px;width:473px"></div>
<div class="hr" style="left:347px;top:876px;width:473px"></div>
<div class="hr" style="left:851px;top:808px;width:473px"></div>
<div class="hr" style="left:851px;top:876px;width:473px"></div>
<div class="hr" style="left:1354px;top:808px;width:473px"></div>
<div class="hr" style="left:1354px;top:876px;width:473px"></div>
<svg style="left:367.5px;top:765.5px" width="19.5" height="18" viewBox="0 0 512 480" ><path d="M256 32C114.6 32 0 125.1 0 240c0 49.6 21.4 95 57 130.7C44.5 421.1 2.7 466 2.2 466.5c-2.2 2.3-2.8 5.7-1.5 8.7S4.8 480 8 480c66.3 0 116-31.8 140.6-51.4 32.7 12.3 69 19.4 107.4 19.4 141.4 0 256-93.1 256-208S397.4 32 256 32z" fill="#7d7d7d" fill-rule="evenodd"/></svg>
<div class="t" style="left:395.60px;top:766.00px;font-size:14px;line-height:18px;font-weight:700;color:#7d7d7d;letter-spacing:-0.357px;">Last touch</div>
<div class="t" style="left:400.00px;top:834.00px;font-size:14px;line-height:18px;font-weight:700;color:#7d7d7d;letter-spacing:-0.195px;">Last meeting</div>
<div class="t" style="left:393.10px;top:902.00px;font-size:14px;line-height:18px;font-weight:700;color:#7d7d7d;letter-spacing:-0.240px;">Last touch decision maker</div>
<div class="t" style="right:1094.16px;top:756.10px;font-size:29.5px;line-height:38px;font-weight:700;color:#f4764f;letter-spacing:-0.539px;">3 months</div>
<div class="t" style="right:1094.16px;top:824.10px;font-size:29.5px;line-height:38px;font-weight:700;color:#f4764f;letter-spacing:-0.539px;">6 months</div>
<div class="t" style="right:1094.16px;top:892.10px;font-size:29.5px;line-height:38px;font-weight:700;color:#f4764f;letter-spacing:-0.539px;">6 months</div>
<svg style="left:367.5px;top:834.5px" width="23.500" height="15" viewBox="0 0 47 30"><g fill="#7d7d7d"><rect x="0" y="3.500" width="5.500" height="19"/><rect x="41.500" y="3.500" width="5.500" height="19"/><path d="M8.500 4 L14 4 L18 1 L28 1 L32 4 L38.500 4 L38.500 20.500 L36 20.500 L34.500 25 L30 27.500 L26 29.500 L20 28.500 L13 23.500 L8.500 20.500 Z"/><path d="M13.500 7 L20.500 4.500 L34 21.500" fill="none" stroke="#fff" stroke-width="2.400" stroke-linejoin="round"/><path d="M12 15.500 L22 9 L27 11" fill="none" stroke="#fff" stroke-width="2"/></g></svg>
<svg style="left:367.5px;top:901px" width="16.500" height="19" viewBox="0 0 33 38"><g fill="#7d7d7d"><circle cx="16.500" cy="9" r="8.500"/><path d="M0 38 L0 30 C0 24 4 20.500 10 20.500 L23 20.500 C29 20.500 33 24 33 30 L33 38 Z"/><path d="M13 21 L16.500 30 L20 21" fill="none" stroke="#fff" stroke-width="2"/><path d="M15 24 L18 24 L19 34 L16.500 37 L14 34 Z" fill="#fff"/><path d="M15.500 24.500 L17.500 24.500 L18.200 33.500 L16.500 35.500 L14.800 33.500 Z"/></g></svg>
<svg style="left:871px;top:765.5px" width="14" height="18.5" viewBox="0 0 14 19"><path d="M6.550 0 L6.550 7.200 L0 7.200 L0 6 C0 2.500 2.500 0 6.550 0 Z M7.450 0 C11.500 0 14 2.500 14 6 L14 7.200 L7.450 7.200 Z M0 8.100 L14 8.100 L14 13 C14 16.500 11 19 7 19 C3 19 0 16.500 0 13 Z" fill="#7d7d7d"/></svg>
<div class="t" style="left:893.20px;top:766.00px;font-size:14px;line-height:18px;font-weight:700;color:#7d7d7d;letter-spacing:-0.186px;">Last activity</div>
<div class="t" style="left:898.50px;top:834.00px;font-size:14px;line-height:18px;font-weight:700;color:#7d7d7d;letter-spacing:-0.059px;">Nb connect 30d</div>
<div class="t" style="left:902.70px;top:902.00px;font-size:14px;line-height:18px;font-weight:700;color:#7d7d7d;letter-spacing:-0.397px;">Active users</div>
<div class="t" style="right:590.38px;top:756.10px;font-size:29.5px;line-height:38px;font-weight:700;color:#4ec89c;letter-spacing:-0.818px;">14 hours</div>
<div class="t" style="right:591.40px;top:824.10px;font-size:29.5px;line-height:38px;font-weight:700;color:#4ec89c;letter-spacing:0.195px;">729</div>
<div class="t" style="right:591.10px;top:892.10px;font-size:29.5px;line-height:38px;font-weight:700;color:#4ec89c;letter-spacing:-0.105px;">7</div>
<svg style="left:871px;top:835px" width="19" height="16" viewBox="0 0 38 32"><g fill="#7d7d7d"><path d="M0 11 L14 11 L14 1.500 L28 16 L14 30.500 L14 21 L0 21 Z"/><path d="M26 3.700 L31 3.700 Q35.800 3.700 35.800 8.500 L35.800 23.500 Q35.800 28.300 31 28.300 L26 28.300" fill="none" stroke="#7d7d7d" stroke-width="4.200" stroke-linecap="round"/></g></svg>
<svg style="left:871px;top:902px" width="23" height="18" viewBox="0 0 46 36"><g fill="#7d7d7d"><circle cx="14" cy="8" r="8"/><path d="M0 36 L0 26.65 C0 20.7 4.2 19 9.799999999999999 19 L18.2 19 C23.8 19 28 20.7 28 26.65 L28 36 Z"/><path d="M34 15 L45 18.500 C45 27 41 33 34 36 C27 33 23 27 23 18.500 Z" stroke="#fff" stroke-width="3" /><path d="M34 19.500 L34 31.500 C30 29.500 27.500 26 27.200 21.500 Z" fill="#fff"/></g></svg>
<div class="t" style="left:1374.20px;top:760.10px;font-size:22px;line-height:29px;font-weight:700;color:#7d7d7d;letter-spacing:0.066px;">€</div>
<div class="t" style="left:1394.20px;top:766.00px;font-size:14px;line-height:18px;font-weight:700;color:#7d7d7d;letter-spacing:0.580px;">Mrr</div>
<svg style="left:1374.5px;top:834px" width="18" height="18" viewBox="0 0 512 512" ><path d="M256 8C119 8 8 119 8 256s111 248 248 248 248-111 248-248S393 8 256 8zm57.1 350.1L224.9 294c-3.100-2.300-4.900-5.900-4.900-9.700V116c0-6.600 5.400-12 12-12h48c6.600 0 12 5.400 12 12v137.700l63.500 46.200c5.400 3.900 6.500 11.400 2.600 16.800l-28.200 38.800c-3.900 5.300-11.400 6.500-16.800 2.600z" fill="#7d7d7d" fill-rule="evenodd"/></svg>
<div class="t" style="left:1401.50px;top:834.00px;font-size:14px;line-height:18px;font-weight:700;color:#7d7d7d;letter-spacing:-0.281px;">Renew in</div>
<svg style="left:1374px;top:901.3px" width="19.500" height="19.500" viewBox="0 0 36 36"><path d="M9.500 9 A13 13 0 1 1 5.500 22" fill="none" stroke="#7d7d7d" stroke-width="5.600" stroke-linecap="round"/><path d="M1 1 L1 15.500 L15.500 15.500 Z" fill="#7d7d7d"/></svg>
<div class="t" style="left:1401.50px;top:902.00px;font-size:14px;line-height:18px;font-weight:700;color:#7d7d7d;letter-spacing:-0.072px;">Auto renew</div>
<div class="t" style="right:88.80px;top:756.10px;font-size:29.5px;line-height:38px;font-weight:700;color:#555;letter-spacing:-0.103px;">€1,790.00</div>
<div class="t" style="right:88.01px;top:824.10px;font-size:29.5px;line-height:38px;font-weight:700;color:#f4764f;letter-spacing:-0.887px;">11 days</div>
<div class="t" style="right:88.99px;top:892.10px;font-size:29.5px;line-height:38px;font-weight:700;color:#ffc65d;letter-spacing:0.089px;">No</div>
</body></html>
